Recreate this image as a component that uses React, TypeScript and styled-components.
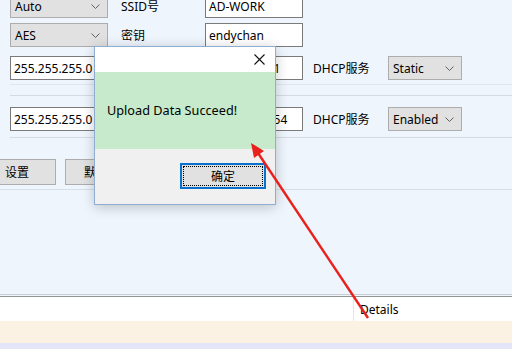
import styled, { createGlobalStyle } from "styled-components";

const GlobalStyle = createGlobalStyle`
  html, body {
    margin: 0;
    padding: 0;
    overflow: hidden;
  }
  body {
    font-family: "Noto Sans", "Noto Sans CJK SC", sans-serif;
    font-size: 12px;
    color: #000;
  }
`;

const Page = styled.div`
  position: relative;
  width: 512px;
  height: 349px;
  background: #eef5fc;
  display: flex;
  flex-direction: column;
  overflow: hidden;
`;

const Form = styled.div`
  display: flex;
  flex-direction: column;
  padding-left: 10px;
  margin-top: -6px;
`;

const Row = styled.div<{ $top: number }>`
  display: flex;
  align-items: center;
  height: 24px;
  margin-top: ${(p) => p.$top}px;
`;

const Select = styled.div<{ $width: number }>`
  box-sizing: border-box;
  width: ${(p) => p.$width}px;
  height: 24px;
  background: #e1e1e1;
  border: 1px solid #adadad;
  display: flex;
  align-items: center;
  justify-content: space-between;
  padding: 0 7px 0 4px;
`;

const Input = styled.div<{ $width: number }>`
  box-sizing: border-box;
  width: ${(p) => p.$width}px;
  height: 24px;
  background: #fff;
  border: 1px solid #7a7a7a;
  display: flex;
  align-items: center;
  padding: 0 3px;
  white-space: nowrap;
  overflow: hidden;
`;

const Label = styled.div<{ $width: number; $left: number }>`
  width: ${(p) => p.$width}px;
  margin-left: ${(p) => p.$left}px;
  white-space: nowrap;
`;

const Line = styled.div<{ $top: number; $color?: string }>`
  height: 1px;
  margin-top: ${(p) => p.$top}px;
  background: ${(p) => p.$color ?? "#d9e1ea"};
`;

const ButtonRow = styled.div`
  display: flex;
  gap: 9px;
  margin-top: 21px;
  margin-left: -32px;
`;

const Button = styled.div<{ $width: number }>`
  box-sizing: border-box;
  width: ${(p) => p.$width}px;
  height: 26px;
  background: #e1e1e1;
  border: 1px solid #adadad;
  display: flex;
  align-items: center;
  justify-content: center;
`;

const Spacer = styled.div`
  flex: 1;
`;

const Grid = styled.div`
  border-top: 1px solid #c9ced2;
`;

const GridEdge = styled.div`
  height: 1px;
  margin-top: 1px;
  background: #8f9595;
`;

const HeaderRow = styled.div`
  display: flex;
  height: 24px;
  background: #fff;
`;

const HeaderCell = styled.div<{ $width?: number }>`
  ${(p) => (p.$width ? `width: ${p.$width}px;` : "flex: 1;")}
  box-sizing: border-box;
  display: flex;
  align-items: center;
  padding-left: 6px;
  padding-top: 1px;
  & + & {
    border-left: 1px solid #e3e6ea;
  }
`;

const BeigeRow = styled.div`
  height: 22px;
  background: #fcf2e4;
`;

const LavenderRow = styled.div`
  flex: 0 0 6px;
  background: #e5e5f9;
`;

const Dialog = styled.div`
  position: absolute;
  left: 94px;
  top: 46px;
  width: 182px;
  height: 159px;
  box-sizing: border-box;
  border: 1px solid #8eadd0;
  background: #f0f0f0;
  box-shadow: 0 2px 12px rgba(0, 0, 0, 0.22);
  display: flex;
  flex-direction: column;
`;

const TitleBar = styled.div`
  height: 25px;
  background: #fff;
  display: flex;
  justify-content: flex-end;
  align-items: center;
  padding-right: 10px;
`;

const Message = styled.div`
  height: 77px;
  background: #c6eacb;
  display: flex;
  align-items: center;
  padding-left: 12px;
  padding-bottom: 2px;
  box-sizing: border-box;
  font-size: 12.7px;
`;

const Footer = styled.div`
  flex: 1;
  display: flex;
  justify-content: flex-end;
  align-items: flex-start;
  padding: 14px 9px 0 0;
`;

const OkButton = styled.div`
  box-sizing: border-box;
  width: 86px;
  height: 26px;
  border: 2px solid #0a72cc;
  background: #e1e1e1;
  padding: 1px;
  display: flex;
`;

const FocusRect = styled.div`
  flex: 1;
  border: 1px dotted #000;
  display: flex;
  align-items: center;
  justify-content: center;
`;

const Overlay = styled.svg`
  position: absolute;
  left: 0;
  top: 0;
  pointer-events: none;
`;

function Chevron() {
  return (
    <svg width="9" height="5" viewBox="0 0 9 5">
      <path d="M0.5 0.5 L4.5 4.5 L8.5 0.5" fill="none" stroke="#606060" strokeWidth="1" />
    </svg>
  );
}

export default function App() {
  return (
    <Page>
      <GlobalStyle />
      <Form>
        <Row $top={0}>
          <Select $width={98}>
            Auto <Chevron />
          </Select>
          <Label $width={84} $left={13}>SSID号</Label>
          <Input $width={98}>AD-WORK</Input>
        </Row>
        <Row $top={5}>
          <Select $width={98}>
            AES <Chevron />
          </Select>
          <Label $width={84} $left={13}>密钥</Label>
          <Input $width={98}>endychan</Input>
        </Row>
        <Row $top={9}>
          <Input $width={98}>255.255.255.0</Input>
          <Label $width={84} $left={13} />
          <Input $width={98}>192.168.10.1</Input>
          <Label $width={75} $left={10}>DHCP服务</Label>
          <Select $width={74}>
            Static <Chevron />
          </Select>
        </Row>
        <Line $top={4} $color="#dfe6ee" />
        <Line $top={10} $color="#d3dbe4" />
        <Row $top={11}>
          <Input $width={98}>255.255.255.0</Input>
          <Label $width={84} $left={13} />
          <Input $width={98}>192.168.1.254</Input>
          <Label $width={75} $left={10}>DHCP服务</Label>
          <Select $width={74}>
            Enabled <Chevron />
          </Select>
        </Row>
        <Line $top={6} $color="#d3dbe4" />
        <ButtonRow>
          <Button $width={78}>设置</Button>
          <Button $width={86}>默认设置</Button>
        </ButtonRow>
      </Form>
      <Line $top={4} $color="#d6dee7" />
      <Spacer />
      <Grid>
        <GridEdge />
        <HeaderRow>
          <HeaderCell $width={353} />
          <HeaderCell>Details</HeaderCell>
        </HeaderRow>
      </Grid>
      <BeigeRow />
      <LavenderRow />

      <Dialog>
        <TitleBar>
          <svg width="11" height="11" viewBox="0 0 11 11">
            <path d="M0.5 0.5 L10.5 10.5 M10.5 0.5 L0.5 10.5" stroke="#111" strokeWidth="1.1" />
          </svg>
        </TitleBar>
        <Message>Upload Data Succeed!</Message>
        <Footer>
          <OkButton>
            <FocusRect>确定</FocusRect>
          </OkButton>
        </Footer>
      </Dialog>

      <Overlay width="512" height="349" viewBox="0 0 512 349">
        <line x1="258" y1="153" x2="368" y2="318" stroke="#e8211c" strokeWidth="2.4" />
        <polygon points="251,143 264,151 254,158" fill="#e8211c" />
      </Overlay>
    </Page>
  );
}
